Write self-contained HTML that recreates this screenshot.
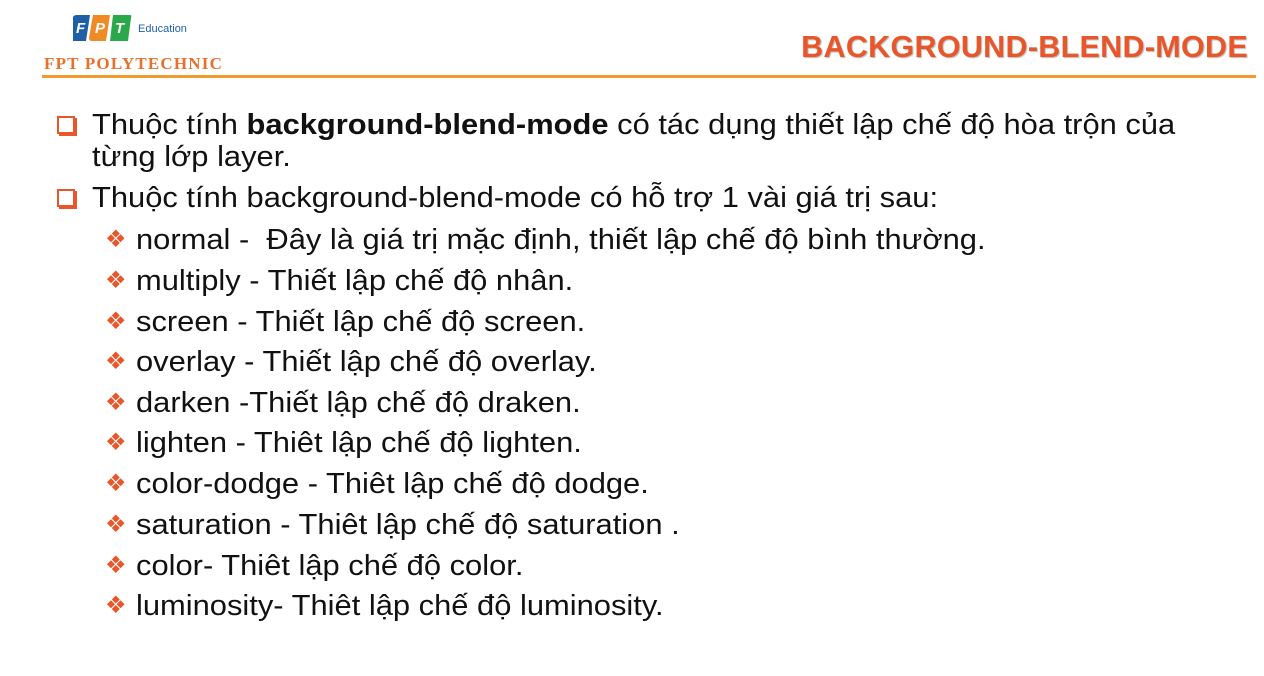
<!DOCTYPE html>
<html><head><meta charset="utf-8"><style>
body{margin:0;width:1264px;height:676px;background:#fff;position:relative;overflow:hidden;font-family:"Liberation Sans",sans-serif;color:#111}
.line{position:absolute;left:42px;top:75px;width:1214px;height:3px;background:#f39a2e}
.title{position:absolute;right:16px;top:30px;font-size:30.5px;font-weight:bold;color:#e8562a;text-shadow:1px 1px 1px #b9b9b9;letter-spacing:0.3px}
.poly{position:absolute;left:44px;top:54px;font-family:"Liberation Serif",serif;font-weight:bold;font-size:17px;color:#e8702a;letter-spacing:1.2px}
.edu{position:absolute;left:138px;top:23px;font-size:11px;color:#1f5fa8}
.t{position:absolute;font-size:29px;white-space:nowrap;line-height:34px;transform:scaleX(1.065);transform-origin:0 0}
.box{position:absolute;width:14px;height:14px;border:2px solid #e8562a;box-shadow:2px 2px 0 #e8562a;background:#fff}
.dia{position:absolute;color:#e8562a;font-size:24px}
</style></head><body>
<svg style="position:absolute;left:70px;top:13px" width="64" height="30" viewBox="0 0 64 30">
<path d="M3 4 Q4 2 7 2 L20 2 L16 28 L3 28 Z" fill="#1f5fa8"/>
<path d="M23 2 L40 2 L36 28 L22 28 Q19 28 19 25 Z" fill="#f08a24"/>
<path d="M43 2 L60 2 Q62 2 61 5 L58 28 L40 28 Z" fill="#2aa84a"/>
<text x="6" y="20" font-family="Liberation Sans" font-weight="bold" font-style="italic" font-size="15" fill="#fff">F</text>
<text x="25" y="20" font-family="Liberation Sans" font-weight="bold" font-style="italic" font-size="15" fill="#fff">P</text>
<text x="45" y="20" font-family="Liberation Sans" font-weight="bold" font-style="italic" font-size="15" fill="#fff">T</text>
</svg>
<div class="edu">Education</div>
<div class="poly">FPT POLYTECHNIC</div>
<div class="title">BACKGROUND-BLEND-MODE</div>
<div class="line"></div>

<div class="box" style="left:57px;top:116px"></div>
<div class="t" style="left:92px;top:108px">Thuộc tính <b>background-blend-mode</b> có tác dụng thiết lập chế độ hòa trộn của</div>
<div class="t" style="left:92px;top:140px">từng lớp layer.</div>
<div class="box" style="left:57px;top:189px"></div>
<div class="t" style="left:92px;top:181px">Thuộc tính background-blend-mode có hỗ trợ 1 vài giá trị sau:</div>

<div class="dia" style="left:105px;top:225px">❖</div><div class="t" style="left:136px;top:223px">normal -&nbsp; Đây là giá trị mặc định, thiết lập chế độ bình thường.</div>
<div class="dia" style="left:105px;top:266px">❖</div><div class="t" style="left:136px;top:264px">multiply - Thiết lập chế độ nhân.</div>
<div class="dia" style="left:105px;top:307px">❖</div><div class="t" style="left:136px;top:305px">screen - Thiết lập chế độ screen.</div>
<div class="dia" style="left:105px;top:347px">❖</div><div class="t" style="left:136px;top:345px">overlay - Thiết lập chế độ overlay.</div>
<div class="dia" style="left:105px;top:388px">❖</div><div class="t" style="left:136px;top:386px">darken -Thiết lập chế độ draken.</div>
<div class="dia" style="left:105px;top:428px">❖</div><div class="t" style="left:136px;top:426px">lighten - Thiêt lập chế độ lighten.</div>
<div class="dia" style="left:105px;top:469px">❖</div><div class="t" style="left:136px;top:467px">color-dodge - Thiêt lập chế độ dodge.</div>
<div class="dia" style="left:105px;top:510px">❖</div><div class="t" style="left:136px;top:508px">saturation - Thiêt lập chế độ saturation .</div>
<div class="dia" style="left:105px;top:551px">❖</div><div class="t" style="left:136px;top:549px">color- Thiêt lập chế độ color.</div>
<div class="dia" style="left:105px;top:591px">❖</div><div class="t" style="left:136px;top:589px">luminosity- Thiêt lập chế độ luminosity.</div>
</body></html>
